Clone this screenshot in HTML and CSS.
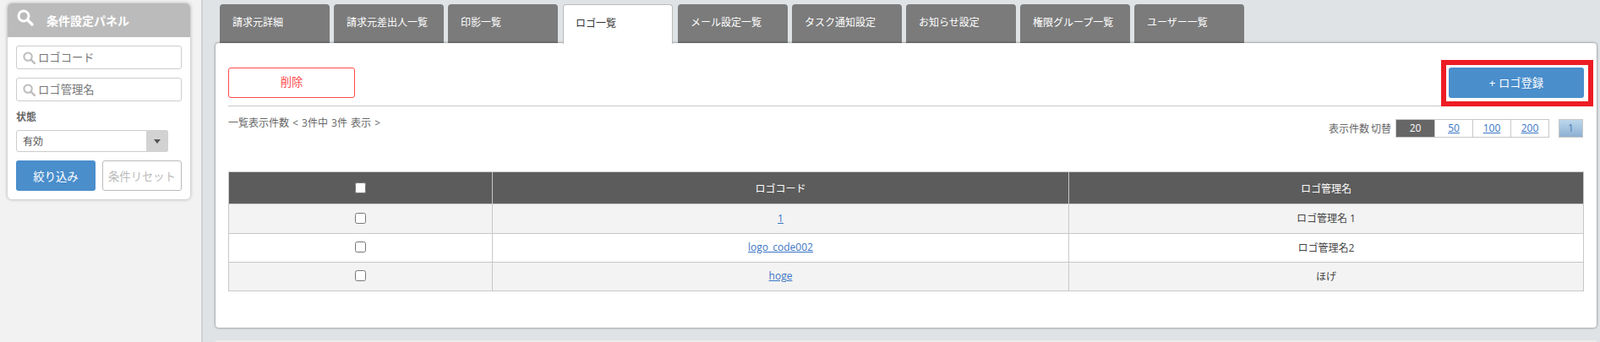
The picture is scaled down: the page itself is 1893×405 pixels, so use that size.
FILE: index.html
```html
<!DOCTYPE html>
<html lang="ja">
<head>
<meta charset="utf-8">
<title>ロゴ一覧</title>
<link rel="stylesheet" href="styles.css">
</head>
<body>
<aside class="sidebar">
  <section class="filter">
    <h2 class="filter-head">
      <svg class="head-icon" viewBox="0 0 20 20"><circle cx="8" cy="8" r="6" fill="none" stroke="#fff" stroke-width="3"/><path d="M12.5 12.5L18 18" stroke="#fff" stroke-width="3.4" stroke-linecap="round"/></svg>
      <span>条件設定パネル</span>
    </h2>
    <div class="filter-body">
      <label class="search">
        <svg class="search-icon" viewBox="0 0 16 16"><circle cx="6.5" cy="6.5" r="5" fill="none" stroke="#bdbdbd" stroke-width="2.2"/><path d="M10.2 10.2L15 15" stroke="#bdbdbd" stroke-width="2.6" stroke-linecap="round"/></svg>
        <input class="search-input" type="text" placeholder="ロゴコード">
      </label>
      <label class="search">
        <svg class="search-icon" viewBox="0 0 16 16"><circle cx="6.5" cy="6.5" r="5" fill="none" stroke="#bdbdbd" stroke-width="2.2"/><path d="M10.2 10.2L15 15" stroke="#bdbdbd" stroke-width="2.6" stroke-linecap="round"/></svg>
        <input class="search-input" type="text" placeholder="ロゴ管理名">
      </label>
      <div class="status-label">状態</div>
      <div class="select-wrap">
        <select class="select"><option>有効</option></select>
      </div>
      <div class="filter-actions">
        <button class="btn-apply" type="button">絞り込み</button>
        <button class="btn-reset" type="button">条件リセット</button>
      </div>
    </div>
  </section>
</aside>
<main class="main">
  <nav class="tabs">
    <a class="tab">請求元詳細</a>
    <a class="tab">請求元差出人一覧</a>
    <a class="tab">印影一覧</a>
    <a class="tab tab-active">ロゴ一覧</a>
    <a class="tab">メール設定一覧</a>
    <a class="tab">タスク通知設定</a>
    <a class="tab">お知らせ設定</a>
    <a class="tab">権限グループ一覧</a>
    <a class="tab">ユーザー一覧</a>
  </nav>
  <section class="panel">
    <div class="actions">
      <button class="btn-delete" type="button">削除</button>
      <div class="add-wrap">
        <button class="btn-add" type="button">+ ロゴ登録</button>
        <span class="highlight"></span>
      </div>
    </div>
    <div class="meta">
      <div class="count">一覧表示件数 &lt; 3件中 3件 表示 &gt;</div>
      <div class="pager">
        <span class="pager-label">表示件数 切替</span>
        <div class="sizes">
          <span class="size size-active">20</span>
          <a class="size">50</a>
          <a class="size">100</a>
          <a class="size">200</a>
        </div>
        <span class="page">1</span>
      </div>
    </div>
    <table class="grid">
      <colgroup><col class="col-a"><col class="col-b"><col></colgroup>
      <thead>
        <tr><th><input class="check" type="checkbox"></th><th>ロゴコード</th><th>ロゴ管理名</th></tr>
      </thead>
      <tbody>
        <tr class="row-1"><td><input class="check" type="checkbox"></td><td><a class="link">1</a></td><td>ロゴ管理名 1</td></tr>
        <tr class="row-2"><td><input class="check" type="checkbox"></td><td><a class="link">logo_code002</a></td><td>ロゴ管理名2</td></tr>
        <tr class="row-3"><td><input class="check" type="checkbox"></td><td><a class="link">hoge</a></td><td>ほげ</td></tr>
      </tbody>
    </table>
  </section>
  <div class="foot-line"></div>
</main>
</body>
</html>
```

FILE: styles.css
```css
* { box-sizing: border-box; }
html, body { height: 100%; }
body {
  margin: 0;
  height: 405px;
  overflow: hidden;
  display: flex;
  font-family: "Open Sans", "Noto Sans CJK JP", sans-serif;
  font-size: 12px;
  color: #444;
  background: #dfe3e6;
}
.sidebar {
  width: 240px;
  flex: none;
  padding: 4px 13px 0 9px;
  background: #f2f2f2;
  border-right: 2px solid #cfd2d4;
}
.filter {
  width: 216px;
  height: 232px;
  background: #fff;
  border-radius: 5px;
  box-shadow: 0 0 4px rgba(0, 0, 0, 0.3);
  overflow: hidden;
}
.filter-head {
  margin: 0;
  height: 40px;
  padding-left: 11px;
  display: flex;
  align-items: center;
  gap: 15px;
  background: #bbb;
  color: #fff;
  font-size: 14px;
  font-weight: 700;
}
.head-icon { width: 20px; height: 20px; margin-top: -6px; }
.filter-body { padding: 10px 10px 0; }
.search {
  height: 28px;
  margin-bottom: 10px;
  padding-left: 7px;
  display: flex;
  align-items: center;
  gap: 3px;
  border: 1px solid #ccc;
  border-radius: 3px;
}
.search-icon { width: 15px; height: 15px; flex: none; }
.search-input {
  flex: 1;
  min-width: 0;
  border: 0;
  padding: 0;
  outline: 0;
  font: inherit;
  font-size: 13.333px;
}
.search-input::placeholder { color: #777; opacity: 1; }
.status-label {
  height: 24px;
  line-height: 18px;
  font-weight: 700;
  color: #666;
}
.select-wrap {
  position: relative;
  width: 180px;
  height: 26px;
}
.select-wrap::after {
  content: "";
  position: absolute;
  top: 0;
  right: 0;
  width: 26px;
  height: 26px;
  border-radius: 0 3px 3px 0;
  background: #d2d2d2;
}
.select-wrap::before {
  content: "";
  position: absolute;
  z-index: 1;
  top: 11px;
  right: 9px;
  border: 4px solid transparent;
  border-top: 5px solid #555;
  border-bottom: 0;
}
.select {
  width: 100%;
  height: 100%;
  padding-left: 7px;
  appearance: none;
  background: #fff;
  border: 1px solid #ccc;
  border-radius: 3px;
  font: inherit;
  color: #555;
}
.filter-actions {
  margin-top: 10px;
  display: flex;
  gap: 8px;
}
.btn-apply, .btn-reset {
  width: 94px;
  height: 36px;
  padding: 0;
  border-radius: 3px;
  font: inherit;
  font-size: 13.333px;
}
.btn-apply { background: #4a8ecc; border: 0; color: #fff; }
.btn-reset { background: #fff; border: 1px solid #bbb; color: #bbb; }

.main {
  flex: 1;
  min-width: 0;
  padding: 5px 4px 0 15px;
}
.tabs {
  height: 46px;
  padding-left: 5px;
  display: flex;
  gap: 5px;
}
.tab {
  position: relative;
  width: 130px;
  height: 46px;
  padding-left: 15px;
  line-height: 44px;
  background: #7b7b7b;
  border-radius: 4px 4px 0 0;
  color: #fff;
}
.tab-active {
  z-index: 2;
  margin: 0 1px 0 1px;
  background: #fff;
  color: #333;
  border: 1px solid #bbb;
  border-bottom: 0;
  padding-left: 14px;
  height: 47px;
}
.panel {
  position: relative;
  height: 337px;
  padding: 29px 15px 0;
  background: #fff;
  border-radius: 4px;
  box-shadow: 0 0 3px rgba(0, 0, 0, 0.55);
}
.actions {
  height: 46px;
  display: flex;
  justify-content: space-between;
  align-items: flex-start;
  border-bottom: 1px solid #c8c8c8;
}
.btn-delete {
  width: 150px;
  height: 36px;
  padding: 0 0 3px;
  background: #fff;
  border: 1px solid #ff4a4a;
  border-radius: 3px;
  color: #ff4a4a;
  font: inherit;
  font-size: 13.333px;
}
.add-wrap { position: relative; }
.btn-add {
  display: block;
  width: 160px;
  height: 36px;
  padding: 0 0 2px;
  background: #4a8ecc;
  border: 0;
  border-radius: 3px;
  color: #fff;
  font: inherit;
  font-size: 13.333px;
}
.highlight {
  position: absolute;
  top: -9px;
  left: -9px;
  right: -11px;
  bottom: -10px;
  border: 6px solid #ed1c24;
}
.meta {
  height: 77px;
  display: flex;
  justify-content: space-between;
  align-items: flex-start;
}
.count {
  margin-top: 12px;
  line-height: 16px;
  word-spacing: 1px;
  color: #666;
}
.pager {
  margin-top: 15px;
  padding-right: 1px;
  display: flex;
  align-items: center;
}
.pager-label { margin-right: 5px; word-spacing: -1px; color: #666; }
.sizes {
  display: flex;
  border: 1px solid #c8c8c8;
}
.size {
  width: 45px;
  height: 20px;
  line-height: 20px;
  text-align: center;
  border-left: 1px solid #c8c8c8;
  color: #3a75c4;
  text-decoration: underline;
}
.size:first-child { border-left: 0; }
.size-active {
  background: #666;
  color: #fff;
  text-decoration: none;
}
.page {
  width: 29px;
  height: 22px;
  margin-left: 11px;
  line-height: 20px;
  text-align: center;
  border: 1px solid #c8c8c8;
  background: linear-gradient(#bcd7ec, #8db0d2);
  color: #4a7fb5;
}
.grid {
  width: 1604px;
  table-layout: fixed;
  border-collapse: collapse;
  text-align: center;
}
.col-a { width: 312px; }
.col-b { width: 682px; }
.grid th, .grid td {
  padding: 0;
  border: 1px solid #c8c8c8;
  vertical-align: middle;
}
.grid th {
  height: 38px;
  background: #5c5c5c;
  color: #fff;
  font-weight: 400;
}
.grid td { padding-bottom: 2px; }
.row-1 td { height: 35px; }
.row-2 td { height: 34px; }
.row-3 td { height: 34px; }
.row-1, .row-3 { background: #f3f3f3; }
.row-2 { background: #fff; }
.check {
  display: block;
  margin: 0 auto;
  width: 13px;
  height: 13px;
}
.link { color: #3a75c4; text-decoration: underline; }
.foot-line {
  margin-top: 15px;
  height: 2px;
  background: #ebebeb;
}
```
